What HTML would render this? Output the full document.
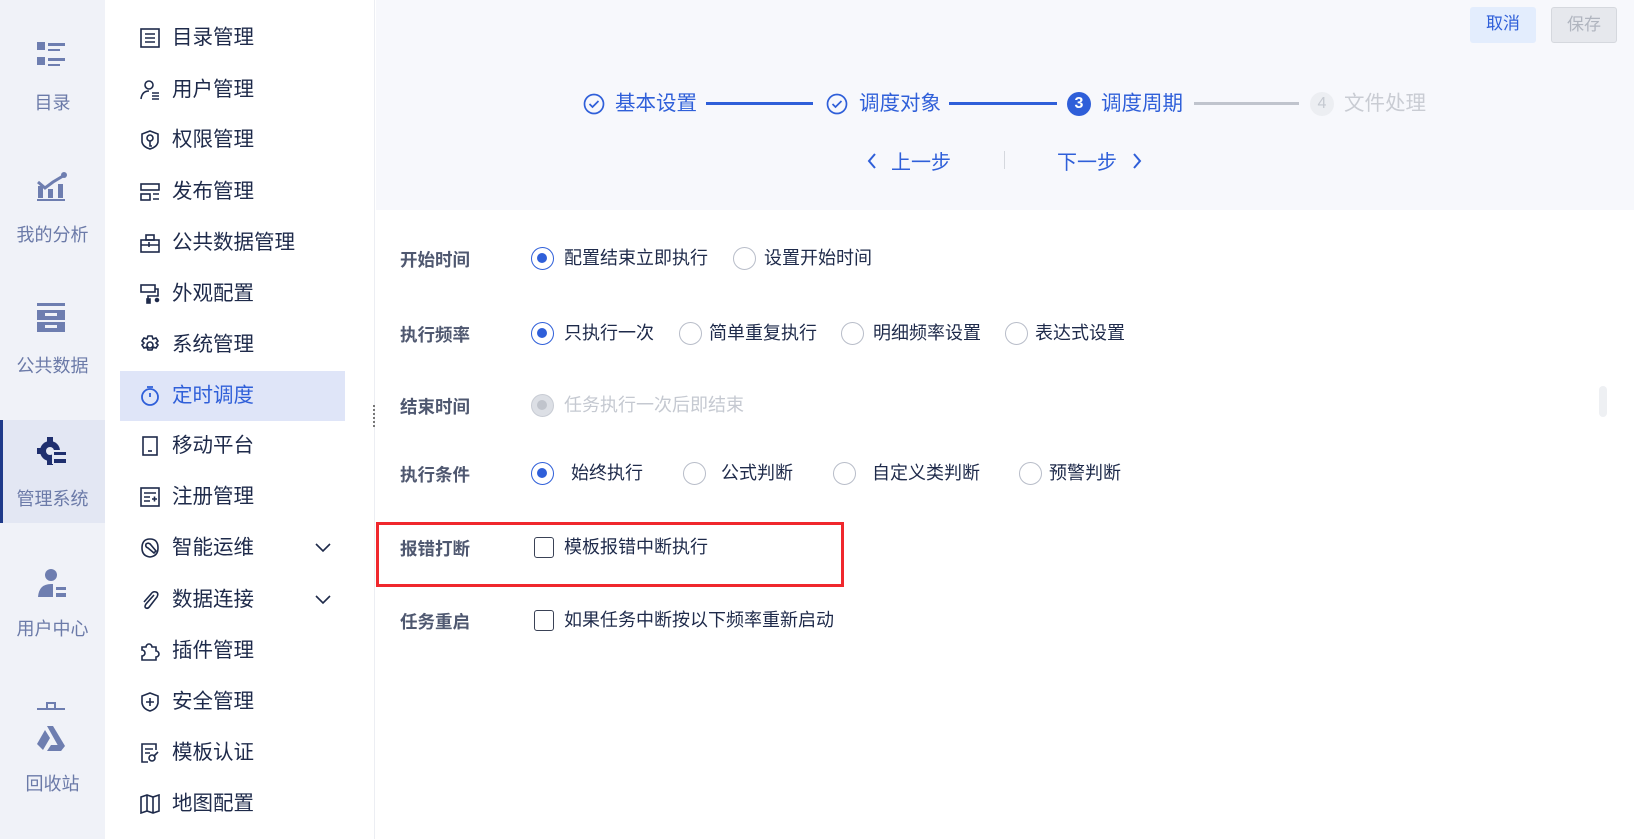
<!DOCTYPE html>
<html><head><meta charset="utf-8"><style>
*{margin:0;padding:0;box-sizing:border-box}
body{width:1634px;height:839px;overflow:hidden;background:#fff;font-family:"Liberation Sans","Noto Sans CJK SC",sans-serif;position:relative}
.rail{position:absolute;left:0;top:0;width:105px;height:839px;background:#f0f2f8}
.ri{position:absolute;left:0;width:105px;text-align:center;color:#6b7aa8;font-size:18px}
.ri svg{position:absolute;left:37px}
.ri span{position:absolute;left:0;width:105px;text-align:center}
.act{background:#e3e7f3;border-left:3px solid #1f3a8a}
.side{position:absolute;left:105px;top:0;width:270px;height:839px;background:#fff;border-right:1px solid #eceef3}
.mi{position:absolute;left:0;width:270px;height:50px;line-height:50px;font-size:20.5px;color:#1e2a4a}
.mi span{position:absolute;left:67px}
.mi svg{position:absolute;left:35px;top:15px}
.mi.on{background:#dfe5f8;left:15px;width:225px;color:#2f5fd9}
.mi.on span{left:52px}.mi.on svg{left:20px}
.mi svg.chev{left:210px;top:20px}
.main{position:absolute;left:376px;top:0;width:1258px;height:839px}
.head{position:absolute;left:0;top:0;width:1258px;height:210px;background:#f7f8fc}
.btn{position:absolute;top:7px;height:36px;line-height:34px;width:66px;text-align:center;font-size:17px;border-radius:3px}
.step{position:absolute;top:92px;font-size:20.5px;line-height:24px}
.line{position:absolute;top:102px;height:3px}
.lbl{position:absolute;left:24px;font-size:17.5px;font-weight:bold;color:#4f5870}
.opt{position:absolute;font-size:18px;color:#1e2a4a;line-height:24px}
.rad{position:absolute;width:23px;height:23px;border-radius:50%;border:1.5px solid #b8bdc9;background:#fff}
.rad.on{border-color:#2f5fd9}
.rad.on::after{content:"";position:absolute;left:5px;top:5px;width:10px;height:10px;border-radius:50%;background:#2f5fd9}
.cb{position:absolute;width:20px;height:21px;border:1.5px solid #3a4256;border-radius:3px}
</style></head><body>
<div class="rail">
 <div class="ri" style="top:0;height:120px"><svg width="30" height="28" viewBox="0 0 30 28" style="top:42px"><rect x="0" y="0" width="8" height="8" fill="#6e7eb0"/><rect x="11" y="1" width="17" height="3" fill="#6e7eb0"/><rect x="11" y="7" width="12" height="2" fill="#6e7eb0"/><rect x="0" y="15" width="8" height="8" fill="#6e7eb0"/><rect x="11" y="16" width="17" height="3" fill="#6e7eb0"/><rect x="11" y="22" width="12" height="2" fill="#6e7eb0"/></svg><span style="top:89px">目录</span></div>
 <div class="ri" style="top:0"><svg width="30" height="30" viewBox="0 0 30 30" style="top:172px"><path d="M1 10 L8 16 L16 10 L26 4" stroke="#6e7eb0" stroke-width="3" fill="none"/><circle cx="27" cy="3" r="3" fill="#6e7eb0"/><rect x="1" y="14" width="5" height="12" fill="#6e7eb0"/><rect x="11" y="17" width="5" height="9" fill="#6e7eb0"/><rect x="21" y="12" width="5" height="14" fill="#6e7eb0"/><rect x="0" y="27" width="28" height="2" fill="#6e7eb0"/></svg><span style="top:221px">我的分析</span></div>
 <div class="ri"><svg width="30" height="30" viewBox="0 0 30 30" style="top:303px"><rect x="0" y="0" width="28" height="3" fill="#6e7eb0"/><rect x="0" y="7" width="28" height="10" fill="#6e7eb0"/><rect x="8" y="10" width="12" height="3" fill="#f0f2f8"/><rect x="0" y="19" width="28" height="10" fill="#6e7eb0"/><rect x="8" y="22" width="12" height="3" fill="#f0f2f8"/></svg><span style="top:352px">公共数据</span></div>
 <div class="ri act" style="top:420px;height:103px"><svg width="30" height="30" viewBox="0 0 30 30" style="left:34px;top:17px"><circle cx="13" cy="14" r="10" fill="#1f2f6e"/><g fill="#1f2f6e"><rect x="10" y="0" width="6" height="5"/><rect x="10" y="23" width="6" height="5"/><rect x="0" y="11" width="5" height="6"/></g><circle cx="13" cy="14" r="4" fill="#e3e7f3"/><rect x="15" y="13" width="15" height="14" fill="#e3e7f3"/><rect x="17" y="15" width="12" height="3" fill="#1f2f6e"/><rect x="17" y="22" width="12" height="4" fill="#1f2f6e"/></svg><span style="top:65px;left:-3px">管理系统</span></div>
 <div class="ri"><svg width="30" height="30" viewBox="0 0 30 30" style="top:568px"><circle cx="14" cy="7" r="6" fill="#6e7eb0"/><path d="M1 29 Q2 16 14 16 L16 16 L16 29 Z" fill="#6e7eb0"/><rect x="19" y="19" width="10" height="3" fill="#6e7eb0"/><rect x="19" y="25" width="10" height="4" fill="#6e7eb0"/></svg><span style="top:615px">用户中心</span></div>
 <div class="ri"><svg width="30" height="8" viewBox="0 0 30 8" style="top:702px"><rect x="9" y="0" width="10" height="2" fill="#6e7eb0"/><rect x="9" y="0" width="2" height="6" fill="#6e7eb0"/><rect x="17" y="0" width="2" height="6" fill="#6e7eb0"/><rect x="0" y="6" width="28" height="2" fill="#6e7eb0"/></svg></div>
 <div class="ri"><svg width="30" height="28" viewBox="0 0 30 28" style="top:724px"><path d="M10 2 L16 2 L28 22 L24 27 Z" fill="#6e7eb0"/><path d="M8 6 L13 14 L6 26 L0 20 Z" fill="#6e7eb0"/><path d="M10 27 L14 21 L27 21 L24 27Z" fill="#6e7eb0"/></svg><span style="top:770px">回收站</span></div>
</div>
<div class="side">
 <div class="mi" style="top:13px"><svg width="20" height="20" viewBox="0 0 20 20" fill="none" stroke="#1e2a4a" stroke-width="1.6"><rect x="1" y="1" width="18" height="18"/><path d="M5 6h10M5 10h10M5 14h10"/></svg><span>目录管理</span></div>
 <div class="mi" style="top:65px"><svg width="20" height="20" viewBox="0 0 20 20" fill="none" stroke="#1e2a4a" stroke-width="1.6"><circle cx="9" cy="5" r="4"/><path d="M1 19 Q2 11 9 11M12 13h7M12 16h7M12 19h7"/></svg><span>用户管理</span></div>
 <div class="mi" style="top:115px"><svg width="20" height="20" viewBox="0 0 20 20" fill="none" stroke="#1e2a4a" stroke-width="1.6"><path d="M10 1 L18 4 L18 12 Q17 17 10 19 Q3 17 2 12 L2 4 Z"/><circle cx="10" cy="8" r="3"/><path d="M10 11v5h2"/></svg><span>权限管理</span></div>
 <div class="mi" style="top:167px"><svg width="20" height="20" viewBox="0 0 20 20" fill="none" stroke="#1e2a4a" stroke-width="1.6"><rect x="1" y="2" width="18" height="6"/><rect x="1" y="12" width="9" height="6"/><path d="M13 12h6M13 17h6"/></svg><span>发布管理</span></div>
 <div class="mi" style="top:218px"><svg width="20" height="20" viewBox="0 0 20 20" fill="none" stroke="#1e2a4a" stroke-width="1.6"><rect x="1" y="7" width="18" height="12"/><rect x="6" y="2" width="8" height="5"/><path d="M1 12h18M9 9v5"/></svg><span>公共数据管理</span></div>
 <div class="mi" style="top:269px"><svg width="20" height="20" viewBox="0 0 20 20" fill="none" stroke="#1e2a4a" stroke-width="1.6"><rect x="1" y="1" width="14" height="7"/><path d="M15 5h3v7h-10v3"/><rect x="7" y="15" width="3" height="4" fill="#1e2a4a"/><circle cx="17" cy="16" r="1.5" fill="#1e2a4a"/></svg><span>外观配置</span></div>
 <div class="mi" style="top:320px"><svg width="20" height="20" viewBox="0 0 20 20" fill="none" stroke="#1e2a4a" stroke-width="1.6"><path d="M8 1h4l1 3 3-1 2 3-2 2 2 2-2 3-3-1-1 3H8l-1-3-3 1-2-3 2-2-2-2 2-3 3 1z"/><circle cx="10" cy="10" r="3"/></svg><span>系统管理</span></div>
 <div class="mi on" style="top:371px"><svg width="20" height="20" viewBox="0 0 20 20" fill="none" stroke="#2f5fd9" stroke-width="1.8"><circle cx="10" cy="11" r="8"/><path d="M10 7v4M7 1h6"/></svg><span>定时调度</span></div>
 <div class="mi" style="top:421px"><svg width="20" height="20" viewBox="0 0 20 20" fill="none" stroke="#1e2a4a" stroke-width="1.6"><rect x="3" y="1" width="14" height="18"/><path d="M8 15h4"/></svg><span>移动平台</span></div>
 <div class="mi" style="top:472px"><svg width="20" height="20" viewBox="0 0 20 20" fill="none" stroke="#1e2a4a" stroke-width="1.6"><rect x="1" y="1" width="18" height="18"/><path d="M4 6h12M4 10h6M4 14h6M12 12h5M14.5 9.5v5"/></svg><span>注册管理</span></div>
 <div class="mi" style="top:523px"><svg width="20" height="20" viewBox="0 0 20 20" fill="none" stroke="#1e2a4a" stroke-width="1.6"><path d="M10 1 Q18 1 18 10 Q18 18 10 19 Q2 18 2 10 Q2 1 10 1Z"/><path d="M6 6 Q9 4 11 7 L16 13 L14 15 L8 10 Q5 9 6 6Z"/></svg><span>智能运维</span><svg class="chev" width="16" height="10" viewBox="0 0 16 10"><path d="M1 1l7 7 7-7" fill="none" stroke="#1e2a4a" stroke-width="1.6"/></svg></div>
 <div class="mi" style="top:575px"><svg width="20" height="20" viewBox="0 0 20 20" fill="none" stroke="#1e2a4a" stroke-width="1.6"><path d="M14 5 L6 14 Q4 17 6 18 Q8 19 10 16 L17 7 Q19 3 16 2 Q13 1 11 4 L4 12"/></svg><span>数据连接</span><svg class="chev" width="16" height="10" viewBox="0 0 16 10"><path d="M1 1l7 7 7-7" fill="none" stroke="#1e2a4a" stroke-width="1.6"/></svg></div>
 <div class="mi" style="top:626px"><svg width="20" height="20" viewBox="0 0 20 20" fill="none" stroke="#1e2a4a" stroke-width="1.6"><path d="M2 6h4a3 3 0 0 1 6 0h4v4a3 3 0 0 1 0 6v3H2v-4a3 3 0 0 0 0-6z"/></svg><span>插件管理</span></div>
 <div class="mi" style="top:677px"><svg width="20" height="20" viewBox="0 0 20 20" fill="none" stroke="#1e2a4a" stroke-width="1.6"><path d="M10 1 L18 4 L18 11 Q17 17 10 19 Q3 17 2 11 L2 4 Z"/><path d="M6 10h8M10 6v8"/></svg><span>安全管理</span></div>
 <div class="mi" style="top:728px"><svg width="20" height="20" viewBox="0 0 20 20" fill="none" stroke="#1e2a4a" stroke-width="1.6"><path d="M16 7V1H2v18h6M5 6h8M5 10h5"/><circle cx="12" cy="15" r="3"/><path d="M14 13l4-4"/></svg><span>模板认证</span></div>
 <div class="mi" style="top:779px"><svg width="20" height="20" viewBox="0 0 20 20" fill="none" stroke="#1e2a4a" stroke-width="1.6"><path d="M1 3l6-2 6 2 6-2v16l-6 2-6-2-6 2z M7 1v16M13 3v16"/></svg><span>地图配置</span></div>
</div>
<div style="position:absolute;left:373px;top:405px;width:3px;height:22px;border-left:2px dotted #777"></div>
<div class="main">
 <div class="head"></div>
 <div class="btn" style="left:1094px;background:#e3edfd;color:#2f5fd9">取消</div>
 <div class="btn" style="left:1175px;background:#e6e8ed;border:1px solid #d5d8de;color:#b0b5bf">保存</div>
 <svg style="position:absolute;left:207px;top:93px" width="22" height="22" viewBox="0 0 22 22"><circle cx="11" cy="11" r="9.5" fill="none" stroke="#2f5fd9" stroke-width="1.7"/><path d="M6.5 11l3 3 6-6" fill="none" stroke="#2f5fd9" stroke-width="1.7"/></svg>
 <div class="step" style="left:239px;color:#2f5fd9">基本设置</div>
 <div class="line" style="left:330px;width:107px;background:#2f5fd9"></div>
 <svg style="position:absolute;left:450px;top:93px" width="22" height="22" viewBox="0 0 22 22"><circle cx="11" cy="11" r="9.5" fill="none" stroke="#2f5fd9" stroke-width="1.7"/><path d="M6.5 11l3 3 6-6" fill="none" stroke="#2f5fd9" stroke-width="1.7"/></svg>
 <div class="step" style="left:483px;color:#2f5fd9">调度对象</div>
 <div class="line" style="left:573px;width:108px;background:#2f5fd9"></div>
 <div style="position:absolute;left:691px;top:92px;width:24px;height:24px;border-radius:50%;background:#2f5fd9;color:#fff;font-size:16px;font-weight:bold;text-align:center;line-height:24px">3</div>
 <div class="step" style="left:725px;color:#2f5fd9">调度周期</div>
 <div class="line" style="left:818px;width:105px;background:#c0c4cd"></div>
 <div style="position:absolute;left:934px;top:92px;width:24px;height:24px;border-radius:50%;background:#eceef2;color:#c5c9d1;font-size:16px;text-align:center;line-height:24px">4</div>
 <div class="step" style="left:968px;color:#c9ccd3">文件处理</div>
 <svg style="position:absolute;left:490px;top:152px" width="12" height="18" viewBox="0 0 12 18"><path d="M9 2L3 9l6 7" fill="none" stroke="#2f5fd9" stroke-width="2"/></svg>
 <div style="position:absolute;left:515px;top:146px;font-size:20px;color:#2f5fd9">上一步</div>
 <div style="position:absolute;left:628px;top:151px;width:1px;height:18px;background:#d5d8de"></div>
 <div style="position:absolute;left:681px;top:146px;font-size:20px;color:#2f5fd9">下一步</div>
 <svg style="position:absolute;left:755px;top:152px" width="12" height="18" viewBox="0 0 12 18"><path d="M3 2l6 7-6 7" fill="none" stroke="#2f5fd9" stroke-width="2"/></svg>

 <div class="lbl" style="top:247px">开始时间</div>
 <div class="rad on" style="left:155px;top:247px"></div><div class="opt" style="left:188px;top:246px">配置结束立即执行</div>
 <div class="rad" style="left:357px;top:247px"></div><div class="opt" style="left:388px;top:246px">设置开始时间</div>

 <div class="lbl" style="top:322px">执行频率</div>
 <div class="rad on" style="left:155px;top:322px"></div><div class="opt" style="left:188px;top:321px">只执行一次</div>
 <div class="rad" style="left:303px;top:322px"></div><div class="opt" style="left:333px;top:321px">简单重复执行</div>
 <div class="rad" style="left:465px;top:322px"></div><div class="opt" style="left:497px;top:321px">明细频率设置</div>
 <div class="rad" style="left:629px;top:322px"></div><div class="opt" style="left:659px;top:321px">表达式设置</div>

 <div class="lbl" style="top:394px">结束时间</div>
 <div class="rad" style="left:155px;top:394px;background:#dcdfe5;border-color:#c8ccd4"><div style="position:absolute;left:5px;top:5px;width:10px;height:10px;border-radius:50%;background:#c0c4cc"></div></div><div class="opt" style="left:188px;top:393px;color:#c5c9d1">任务执行一次后即结束</div>

 <div class="lbl" style="top:462px">执行条件</div>
 <div class="rad on" style="left:155px;top:462px"></div><div class="opt" style="left:195px;top:461px">始终执行</div>
 <div class="rad" style="left:307px;top:462px"></div><div class="opt" style="left:345px;top:461px">公式判断</div>
 <div class="rad" style="left:457px;top:462px"></div><div class="opt" style="left:496px;top:461px">自定义类判断</div>
 <div class="rad" style="left:643px;top:462px"></div><div class="opt" style="left:673px;top:461px">预警判断</div>

 <div style="position:absolute;left:0;top:522px;width:468px;height:65px;border:3px solid #f0282d"></div>
 <div class="lbl" style="top:536px">报错打断</div>
 <div class="cb" style="left:158px;top:537px"></div><div class="opt" style="left:188px;top:535px">模板报错中断执行</div>

 <div class="lbl" style="top:609px">任务重启</div>
 <div class="cb" style="left:158px;top:610px"></div><div class="opt" style="left:188px;top:608px">如果任务中断按以下频率重新启动</div>

 <div style="position:absolute;left:1223px;top:386px;width:8px;height:31px;border-radius:4px;background:#eef0f3"></div>
</div>
</body></html>
